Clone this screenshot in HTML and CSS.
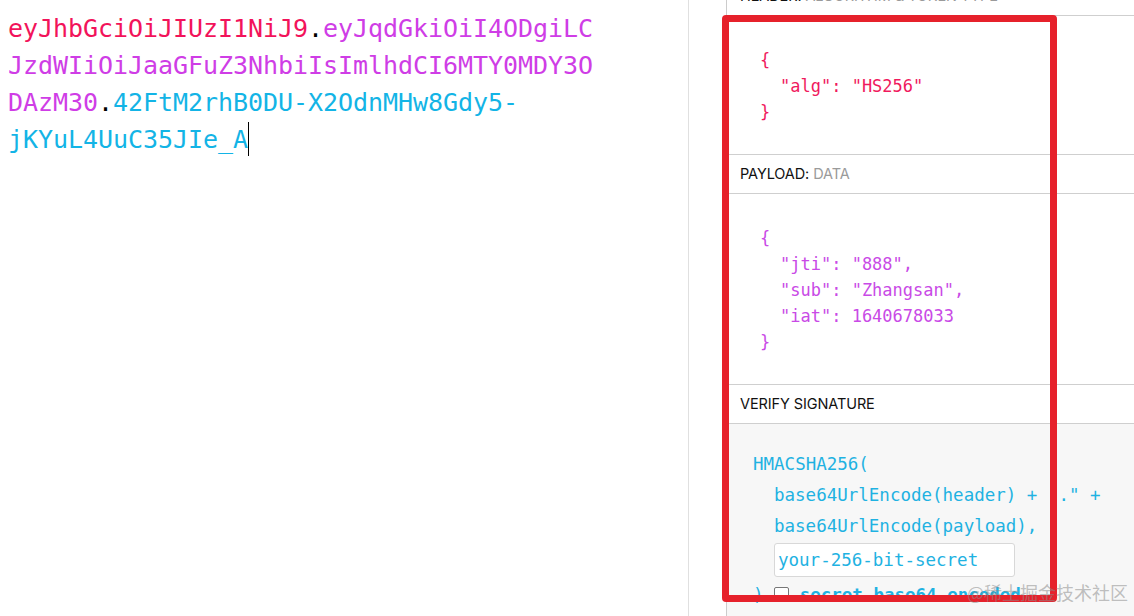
FILE: index.html
```html
<!DOCTYPE html>
<html>
<head>
<meta charset="utf-8">
<link rel="stylesheet" href="styles.css">
</head>
<body>
<div class="page">
  <div class="left">
    <div class="token"><span class="t-h">eyJhbGciOiJIUzI1NiJ9</span><span class="t-dot">.</span><span class="t-p">eyJqdGkiOiI4ODgiLCJzdWIiOiJaaGFuZ3NhbiIsImlhdCI6MTY0MDY3ODAzM30</span><span class="t-dot">.</span><span class="t-s">42FtM2rhB0DU-X2OdnMHw8Gdy5-jKYuL4UuC35JIe_A</span><span class="caret"></span></div>
  </div>
  <div class="right">
    <div class="panel">
      <div class="label">HEADER: <span class="sub">ALGORITHM &amp; TOKEN TYPE</span></div>
      <div class="json json-h">
        <div class="ln">{</div>
        <div class="ln in">"alg": "HS256"</div>
        <div class="ln">}</div>
      </div>
      <div class="label">PAYLOAD: <span class="sub">DATA</span></div>
      <div class="json json-p">
        <div class="ln">{</div>
        <div class="ln in">"jti": "888",</div>
        <div class="ln in">"sub": "Zhangsan",</div>
        <div class="ln in">"iat": 1640678033</div>
        <div class="ln">}</div>
      </div>
      <div class="label">VERIFY SIGNATURE</div>
      <div class="sig">
        <div class="sln">HMACSHA256(</div>
        <div class="sln in">base64UrlEncode(header) + "." +</div>
        <div class="sln in">base64UrlEncode(payload),</div>
        <div class="in"><div class="secret">your-256-bit-secret</div></div>
        <div class="sln last">) <span class="check"></span> <b>secret base64 encoded</b></div>
      </div>
    </div>
  </div>
</div>
<div class="redbox"></div>
<div class="watermark">@稀土掘金技术社区</div>
</body>
</html>
```
FILE: styles.css
```css
html, body {
  margin: 0;
  padding: 0;
  background: #fff;
  overflow: hidden;
}
body {
  width: 1134px;
  height: 616px;
  position: relative;
  font-family: Inter, "Liberation Sans", sans-serif;
}
.page {
  display: flex;
  height: 616px;
  overflow: hidden;
}
.left {
  width: 689px;
  flex: none;
  box-sizing: border-box;
  border-right: 1px solid #e0e0e0;
  padding: 10px 0 0 8px;
}
.token {
  width: 596px;
  font-family: "DejaVu Sans Mono", monospace;
  font-size: 25px;
  line-height: 37px;
  overflow-wrap: break-word;
  letter-spacing: -0.05px;
}
.t-h { color: #f2135a; }
.t-p { color: #cf3de6; }
.t-s { color: #13b4e6; }
.t-dot { color: #000; }
.caret {
  display: inline-block;
  width: 1px;
  height: 34px;
  background: #000;
  vertical-align: -8px;
}
.right {
  flex: 1;
  padding-left: 37px;
}
.panel {
  margin-top: -23px;
  border-left: 1px solid #ccc;
  height: 700px;
}
.label {
  height: 38px;
  line-height: 38px;
  border-bottom: 1px solid #cfcfcf;
  padding-left: 13px;
  font-size: 14.5px;
  color: #111;
  letter-spacing: -0.1px;
}
.label .sub { color: #9a9a9a; }
.json {
  font-family: "DejaVu Sans Mono", monospace;
  font-size: 17px;
  line-height: 26px;
  padding: 31px 0 29px 33px;
  border-bottom: 1px solid #cfcfcf;
}
.json-h { color: #f01a5e; }
.json-p { color: #c94ae6; }
.json .in { padding-left: 20px; }
.sig {
  background: #f7f7f7;
  height: 300px;
  padding: 25px 0 0 26px;
  font-family: "DejaVu Sans Mono", monospace;
  font-size: 17.5px;
  color: #1fb2e2;
}
.sln {
  line-height: 31px;
  white-space: pre;
}
.sig .in { padding-left: 21px; }
.secret {
  margin-top: 1px;
  width: 236px;
  height: 32px;
  line-height: 32px;
  background: #fff;
  border: 1px solid #d8d8d8;
  border-radius: 3px;
  padding-left: 3px;
}
.sln.last {
  margin-top: 3px;
}
.check {
  display: inline-block;
  width: 13px;
  height: 13px;
  border: 1px solid #777;
  border-radius: 2px;
  background: #fff;
  vertical-align: -1px;
}
.sln b { font-weight: bold; }
.redbox {
  position: absolute;
  left: 722px;
  top: 15px;
  width: 335px;
  height: 587px;
  box-sizing: border-box;
  border: 7px solid #e6212b;
  border-radius: 4px;
}
.watermark {
  position: absolute;
  left: 967px;
  top: 579px;
  font-family: "Noto Sans CJK SC", sans-serif;
  font-size: 18px;
  line-height: 26px;
  color: rgba(140, 140, 140, 0.55);
  white-space: nowrap;
}
```
